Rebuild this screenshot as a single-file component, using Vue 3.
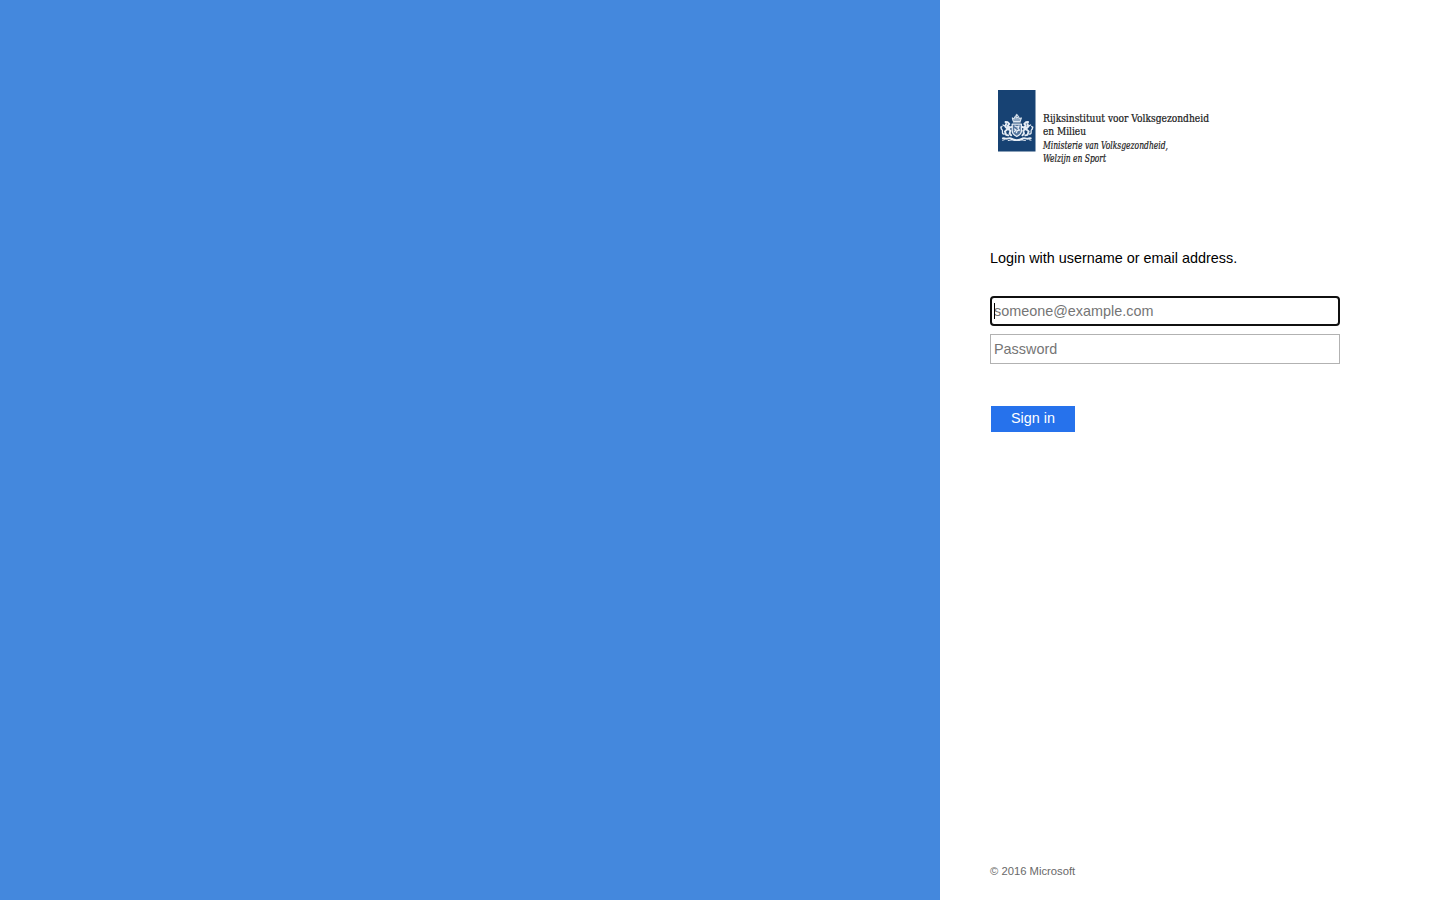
<script setup>
import { ref } from 'vue'

const username = ref('')
const password = ref('')
const logoLines = [
  { text: 'Rijksinstituut voor Volksgezondheid', y: 32, width: 166, italic: false },
  { text: 'en Milieu', y: 45.2, width: 43, italic: false },
  { text: 'Ministerie van Volksgezondheid,', y: 58.5, width: 125, italic: true },
  { text: 'Welzijn en Sport', y: 71.5, width: 63, italic: true }
]
</script>

<template>
  <div class="page">
    <div class="branding"></div>
    <main class="panel">
      <svg class="logo" width="230" height="80" viewBox="0 0 230 80" role="img" aria-label="Rijksinstituut voor Volksgezondheid en Milieu">
        <rect x="8" y="0" width="37.5" height="61.5" fill="#174273" />
        <!-- crown, shield and supporting lions -->
        <g fill="none" stroke="#e6edf5" stroke-linecap="round" stroke-linejoin="round">
          <path d="M23.2 31.2 22.2 27.8 24.3 28.7 25 26.3 26.8 28 28.6 26.3 29.3 28.7 31.4 27.8 30.4 31.2Z" fill="#8fa7c2" stroke-width="1" />
          <path d="M26.8 24.4v3M25.8 25.2h2M23.4 32h6.8" stroke-width="1.1" />
          <path d="M22.2 34.2h9.2v6.8c0 2.8-2.2 4.3-4.6 5.5-2.4-1.2-4.6-2.7-4.6-5.5Z" fill="#55769e" stroke-width="1.3" />
          <path d="M25 36l2 1 2-1-1 2.6 1.5 1.6-2.3.5-.8 2M24.5 39l1.5 1-1.5 1.5" stroke-width="1.3" />
          <g id="lion">
            <path d="M15.5 32l2.3.3 1.5 1.6-1.5 1.7 1.8 2.1 2-.8M16.2 33.5l-.8 3 2.3 2.5-2.8 2.4 1.2 3.4 2.2.6M17.5 39l2.9 1.5-.8 3 1.6 1.8M18 36.5l1.2 2.5" stroke-width="1.9" />
            <path d="M14.3 44c-3.2.4-1-3.3-2.2-4.2-1.3-.9-1.4-2.4-.2-3.3M11.2 38.4l-.4-1.4M14.6 35.8l-1.6-.8" stroke-width="1.3" />
            <path d="M12.8 48.3c1.4-.8 2.2.8 3.7.4 2-.5 3.7-1.2 5.5.2" stroke-width="1.8" />
            <path d="M12.6 50.2l1.8-.5M18.2 50.5l4-.7" stroke-width="1" />
          </g>
          <use href="#lion" transform="matrix(-1 0 0 1 53.6 0)" />
          <path d="M21.5 49c3.4 1.4 7.2 1.4 10.6 0" stroke-width="1.9" />
        </g>
        <text
          v-for="line in logoLines"
          :key="line.text"
          x="53"
          :y="line.y"
          :textLength="line.width"
          lengthAdjust="spacingAndGlyphs"
          :class="['logo-text', { italic: line.italic }]"
        >{{ line.text }}</text>
      </svg>

      <p class="intro">Login with username or email address.</p>

      <form @submit.prevent>
        <div class="field">
          <input v-model="username" class="input active" type="text" placeholder="someone@example.com" aria-label="Username" />
          <span class="caret"></span>
        </div>
        <input v-model="password" class="input" type="password" placeholder="Password" aria-label="Password" />
        <button class="submit" type="submit">Sign in</button>
      </form>

      <footer class="footer">© 2016 Microsoft</footer>
    </main>
  </div>
</template>

<style>
body {
  margin: 0;
  background: #fff;
}
</style>

<style scoped>
.page {
  display: flex;
  height: 100vh;
  overflow: hidden;
  font-family: "Liberation Sans", Arial, sans-serif;
  font-size: 14.4px;
  color: #000;
}
.branding {
  flex: 1;
  background: #4488dd;
}
.panel {
  box-sizing: border-box;
  display: flex;
  flex-direction: column;
  width: 500px;
  padding: 90px 100px 20px 50px;
  background: #fff;
}
.logo {
  display: block;
  flex: none;
}
.logo-text {
  font-family: "DejaVu Serif Condensed", "DejaVu Serif", serif;
  font-size: 10.8px;
  fill: #1c1c1c;
  stroke: #1c1c1c;
  stroke-width: 0.22px;
}
.logo-text.italic {
  font-style: italic;
}
.intro {
  margin: 78px 0 0;
  line-height: 20px;
}
form {
  display: flex;
  flex-direction: column;
  align-items: flex-start;
  margin-top: 28px;
}
.field {
  position: relative;
  margin-bottom: 8px;
}
.input {
  box-sizing: border-box;
  display: block;
  width: 350px;
  height: 30px;
  padding: 0 3px;
  border: 1px solid #b2b2b2;
  outline: none;
  background: #fff;
  font: inherit;
}
.input::placeholder {
  color: #757575;
}
.input.active {
  padding: 0 2px;
  border: 2px solid #101010;
  border-radius: 4px;
}
.caret {
  position: absolute;
  top: 7px;
  left: 4px;
  width: 1px;
  height: 16px;
  background: #000;
}
.submit {
  width: 84px;
  height: 26px;
  margin: 42px 0 0 1px;
  padding: 0 0 2px;
  border: 0;
  background: #2672ec;
  color: #fff;
  font: inherit;
}
.footer {
  margin-top: auto;
  font-size: 11.25px;
  line-height: 18px;
  color: #696969;
}
</style>
